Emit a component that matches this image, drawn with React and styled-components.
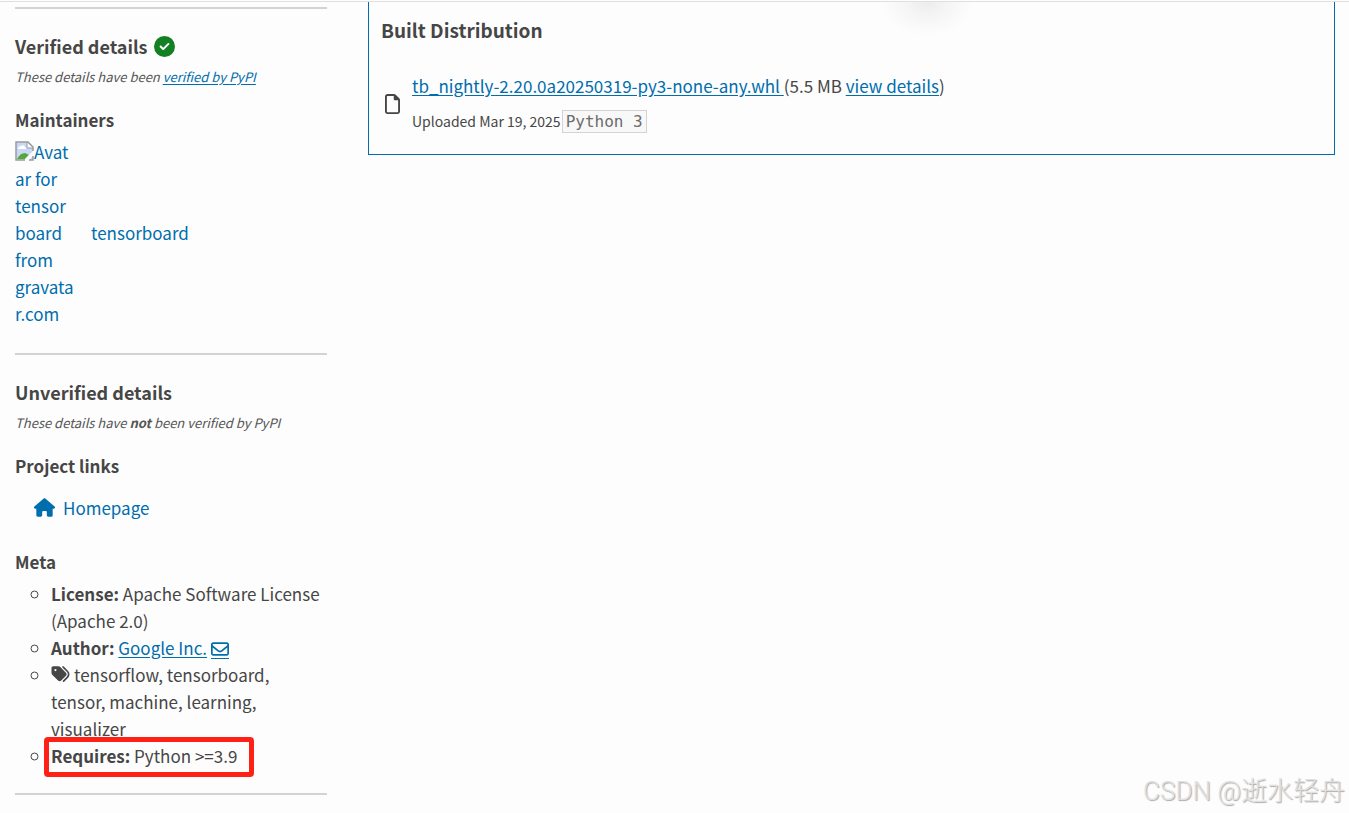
import React from 'react'
import styled, { createGlobalStyle, css } from 'styled-components'
import { FaCircleCheck, FaHouse, FaRegEnvelope, FaRegFile, FaTags } from 'react-icons/fa6'

const GlobalStyle = createGlobalStyle`
    *, *::after {
        box-sizing: border-box;
    }
    body {
        margin: 0;
        background-color: #fdfdfd;
        color: #464646;
        font-family: "Noto Sans CJK SC", "Open Sans", sans-serif;
        font-size: 17px;
        line-height: 27px;
    }
`

const Page = styled.div`
    position: relative;
    min-height: 100vh;
    overflow: hidden;
`

const TopEdge = styled.div`
    position: relative;
    height: 2px;
    border-bottom: 1px solid #e0e0e0;
    &::after {
        content: '';
        position: absolute;
        top: 2px;
        left: 65%;
        width: 100px;
        height: 36px;
        background: radial-gradient(ellipse 46px 34px at 50% 0, #ececec, #f5f5f5 45%, #fdfdfd);
    }
`

const Columns = styled.div`
    display: grid;
    grid-template-columns: 312px 1fr;
    gap: 41px;
    align-items: start;
    padding: 0 14px 0 15px;
`

const Sidebar = styled.aside`
    padding-top: 5px;
`

const Section = styled.section`
    border-top: 2px solid #d3d3d3;
    padding: 23px 0 26px;
    &:last-child {
        border-bottom: 2px solid #d3d3d3;
        padding-bottom: 24px;
    }
`

const Title = styled.h3`
    display: flex;
    align-items: center;
    gap: 6px;
    margin: 0 0 2px;
    font-size: ${props => props.$large ? '19px' : '18px'};
    font-weight: 600;
    line-height: 28px;
    svg {
        color: #148024;
        font-size: 21px;
    }
`

const Note = styled.small`
    display: block;
    color: #555;
    font-size: 13px;
    font-style: italic;
    line-height: 29px;
`

const Subtitle = styled.h4`
    margin: 15px 0 5px;
    font-size: 17px;
    font-weight: 600;
    line-height: 27px;
`

const Anchor = styled.a`
    color: #006dad;
    text-decoration: ${props => props.$plain ? 'none' : 'underline'};
    text-underline-offset: 2px;
`

const Maintainer = styled(Anchor)`
    display: flex;
    align-items: center;
    gap: 16px;
`

const Avatar = styled.span`
    width: 60px;
    overflow-wrap: anywhere;
    svg {
        vertical-align: -2px;
    }
`

const FirstWord = styled.span`
    word-break: break-all;
`

const ProjectLink = styled(Anchor)`
    display: flex;
    align-items: center;
    gap: 8px;
    margin: 15px 0 27px 19px;
    svg {
        font-size: 21px;
    }
`

const MetaList = styled.ul`
    margin: 0;
    padding-left: 36px;
    list-style: circle;
    svg {
        font-size: 18px;
    }
`

const MetaItem = styled.li`
    position: relative;
    ${props => props.$marked && css`
        &::after {
            content: '';
            position: absolute;
            top: -5px;
            left: -7px;
            width: 210px;
            height: 40px;
            border: 5px solid #ff2116;
            border-radius: 4px;
        }
    `}
`

const MailIcon = styled(FaRegEnvelope)`
    vertical-align: -3px;
    box-shadow: 0 1px 0 #006dad;
`

const TagIcon = styled(FaTags)`
    width: 19px;
    vertical-align: -1px;
    margin-right: 4px;
`

const Files = styled.main`
    border: 1px solid #006dad;
    border-top: 0;
    padding: 14px 12px 15px;
`

const FileRow = styled.div`
    display: flex;
    align-items: center;
    gap: 12px;
    margin-top: 24px;
    padding-left: 4px;
    > svg {
        flex: none;
        width: 15px;
        height: 20px;
    }
`

const FileLine = styled.div`
    line-height: 36px;
`

const Uploaded = styled.div`
    display: flex;
    align-items: center;
    gap: 1px;
    font-size: 14px;
    line-height: 35px;
`

const Version = styled.code`
    border: 1px solid #d3d3d3;
    padding: 0 3px;
    background-color: #f8f8f8;
    color: #6c6c6c;
    font-family: "DejaVu Sans Mono", "Liberation Mono", monospace;
    font-size: 16px;
    line-height: 21px;
`

const Watermark = styled.div`
    position: absolute;
    right: 4px;
    bottom: 4px;
    color: #e0e0e0;
    font-family: Roboto, "Noto Sans CJK SC", sans-serif;
    font-size: 26px;
    font-weight: 300;
    line-height: 36px;
    text-shadow: 1px 1px 1px #a8a8a8;
`

const BrokenImage = () => (
    <svg width="19" height="20" viewBox="0 0 19 20" aria-hidden="true">
        <path d="M1 1h12l5 5v13H1z" fill="#c9d8f7" />
        <path d="M3 8q0-3 3-3 3-2 4 1 2 0 1 2z" fill="#fff" />
        <path d="M2 18q3-6 8-6l4 2-4 4z" fill="#55a839" />
        <path d="M19 9L9 19h5l5-5z" fill="#fdfdfd" />
        <path d="M12 1v6h6" fill="#fff" stroke="#9b9b9b" />
        <path d="M18 10V6l-5-5H1v18h9M14 19h4v-4" fill="none" stroke="#9b9b9b" strokeWidth="1.5" />
    </svg>
)

const App = () => (
    <Page>
        <GlobalStyle />
        <TopEdge />
        <Columns>
            <Sidebar>
                <Section>
                    <Title>Verified details <FaCircleCheck /></Title>
                    <Note>These details have been <Anchor href="#verified">verified by PyPI</Anchor></Note>
                    <Subtitle>Maintainers</Subtitle>
                    <Maintainer href="#tensorboard" $plain>
                        <Avatar><FirstWord><BrokenImage />Avatar</FirstWord> for tensorboard from gravatar.com</Avatar>
                        <span>tensorboard</span>
                    </Maintainer>
                </Section>
                <Section>
                    <Title>Unverified details</Title>
                    <Note>These details have <b>not</b> been verified by PyPI</Note>
                    <Subtitle>Project links</Subtitle>
                    <ProjectLink href="#homepage" $plain><FaHouse />Homepage</ProjectLink>
                    <Subtitle>Meta</Subtitle>
                    <MetaList>
                        <MetaItem><b>License:</b> Apache Software License (Apache 2.0)</MetaItem>
                        <MetaItem><b>Author:</b> <Anchor href="#author">Google Inc.</Anchor> <Anchor href="#email" aria-label="Email"><MailIcon /></Anchor></MetaItem>
                        <MetaItem><TagIcon />tensorflow, tensorboard, tensor, machine, learning, visualizer</MetaItem>
                        <MetaItem $marked><b>Requires:</b> Python &gt;=3.9</MetaItem>
                    </MetaList>
                </Section>
            </Sidebar>
            <Files>
                <Title $large>Built Distribution</Title>
                <FileRow>
                    <FaRegFile />
                    <div>
                        <FileLine>
                            <Anchor href="#download">tb_nightly-2.20.0a20250319-py3-none-any.whl </Anchor>
                            (5.5 MB <Anchor href="#details">view details</Anchor>)
                        </FileLine>
                        <Uploaded>Uploaded Mar 19, 2025 <Version>Python 3</Version></Uploaded>
                    </div>
                </FileRow>
            </Files>
        </Columns>
        <Watermark>CSDN @逝水轻舟</Watermark>
    </Page>
)

export default App
